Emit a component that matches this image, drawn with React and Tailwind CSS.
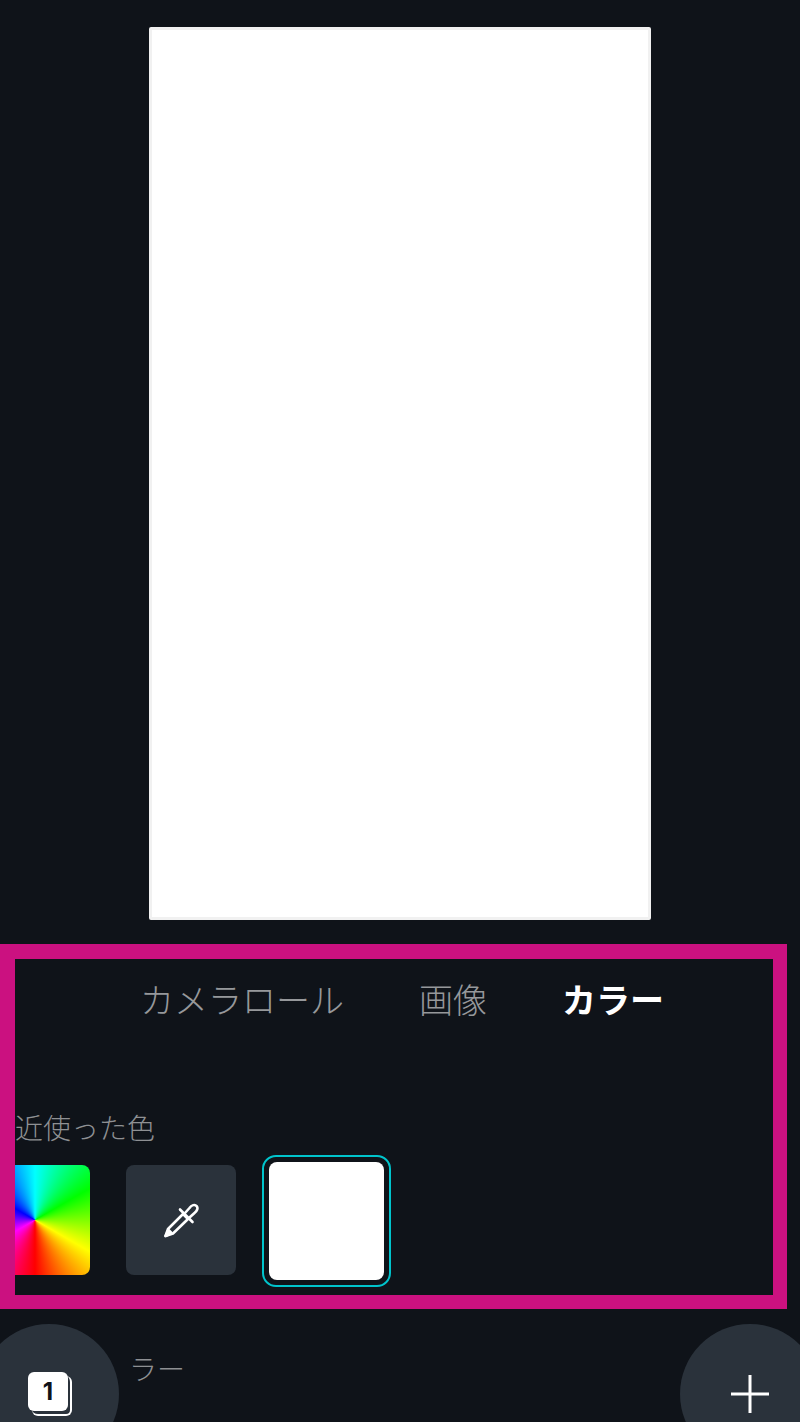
const FONT = "font-['Noto_Sans_CJK_JP','Noto_Sans',sans-serif]"

function PipetteIcon() {
  return (
    <svg width="36" height="36" viewBox="0 0 36 36" fill="none" stroke="white" strokeWidth="2.6" strokeLinecap="round" strokeLinejoin="round">
      <path d="M2.5 34 L5 27 L20 12 L25 17 L10 31.5 Z" fill="none" />
      <path d="M2.5 34 L5.5 28 L8.5 31 Z" fill="white" />
      <path d="M17 7.5 L29.5 20" />
      <path d="M22 11 L26.5 6 C28.5 3 32 2 33.5 4 C35.5 6 34 9 31.5 11 L26.5 15.5" />
    </svg>
  )
}

export default function App() {
  return (
    <div className={`h-[1422px] overflow-hidden bg-[#0f1319] pt-[27px] ${FONT}`}>
      {/* page canvas */}
      <div className="mx-auto h-[893px] w-[502px] rounded-[2px] border-[3px] border-[#f1f1f1] bg-white" />

      {/* highlighted panel */}
      <div className="mt-[24px] h-[365px] w-[787px] overflow-hidden border-t-[15px] border-r-[14px] border-b-[14px] border-l-[15px] border-[#cb1180]">
        <div className="ml-[125px] flex h-[80px] items-center gap-[75px] text-[34px] leading-none">
          <span className="font-light text-[#96989b]">カメラロール</span>
          <span className="font-light text-[#96989b]">画像</span>
          <span className="font-bold text-white">カラー</span>
        </div>
        <div className="mt-[68px] h-[40px] text-[28px] leading-[40px] font-light text-[#8e9093]">近使った色</div>
        <div className="mt-[8px] flex items-start">
          <div className="mt-[10px] -ml-[35px] h-[110px] w-[110px] shrink-0 rounded-[8px] bg-[conic-gradient(#00ffff,#00ff00,#ffff00,#ff0000,#ff00ff,#0000ff,#00ffff)]" />
          <div className="mt-[10px] ml-[36px] grid h-[110px] w-[110px] shrink-0 place-items-center rounded-[8px] bg-[#2a323b]">
            <PipetteIcon />
          </div>
          <div className="ml-[26px] h-[132px] w-[129px] shrink-0 rounded-[14px] border-2 border-[#00c4cc] p-[5px]">
            <div className="h-full w-full rounded-[8px] bg-white" />
          </div>
        </div>
      </div>

      {/* bottom bar */}
      <div className="mt-[15px] flex items-start">
        <div className="relative -ml-[21px] h-[140px] w-[140px] shrink-0 rounded-full bg-[#2a323b]">
          <div className="absolute top-[52px] left-[53px] h-[40px] w-[40px] rounded-[6px] border-2 border-t-0 border-l-0 border-white" />
          <div className="absolute top-[48px] left-[49px] grid h-[39px] w-[40px] place-items-center rounded-[6px] bg-white text-[24px] leading-none font-bold text-[#0f1319] font-['Inter',sans-serif]">1</div>
        </div>
        <span className="mt-[24px] ml-[10px] text-[28px] leading-[40px] font-light text-[#8e9093]">ラー</span>
        <div className="relative ml-auto grid h-[140px] w-[140px] shrink-0 translate-x-[20px] place-items-center rounded-full bg-[#2a323b]">
          <svg width="40" height="40" viewBox="0 0 40 40" stroke="white" strokeWidth="3">
            <path d="M20 1V39M1 20H39" />
          </svg>
        </div>
      </div>
    </div>
  )
}
